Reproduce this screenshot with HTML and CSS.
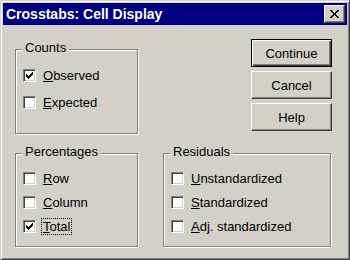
FILE: index.html
```html
<!DOCTYPE html>
<html lang="en">
  <head>
    <meta charset="UTF-8" />
    <title>Crosstabs: Cell Display</title>
    <link rel="stylesheet" href="styles.css">
  </head>
  <body>
    <div class="window">
      <div class="titlebar">
        <span class="title">Crosstabs: Cell Display</span>
        <button class="close-btn">
          <svg width="9" height="8" viewBox="0 0 9 8" shape-rendering="crispEdges">
            <path d="M0 0h2v1h-2zM7 0h2v1h-2zM1 1h2v1h-2zM6 1h2v1h-2zM2 2h2v1h-2zM5 2h2v1h-2zM3 3h3v2h-3zM2 5h2v1h-2zM5 5h2v1h-2zM1 6h2v1h-2zM6 6h2v1h-2zM0 7h2v1h-2zM7 7h2v1h-2z" fill="#000"/>
          </svg>
        </button>
      </div>
      <div class="content">
        <div class="row top-row">
          <div class="group counts">
            <div class="legend">Counts</div>
            <div class="check-list">
              <div class="check">
                <span class="box checked"></span>
                <span class="text"><u>O</u>bserved</span>
              </div>
              <div class="check">
                <span class="box"></span>
                <span class="text"><u>E</u>xpected</span>
              </div>
            </div>
          </div>
          <div class="buttons">
            <button class="btn default">Continue</button>
            <button class="btn">Cancel</button>
            <button class="btn">Help</button>
          </div>
        </div>
        <div class="row bottom-row">
          <div class="group percentages">
            <div class="legend">Percentages</div>
            <div class="check-list">
              <div class="check">
                <span class="box"></span>
                <span class="text"><u>R</u>ow</span>
              </div>
              <div class="check">
                <span class="box"></span>
                <span class="text"><u>C</u>olumn</span>
              </div>
              <div class="check">
                <span class="box checked"></span>
                <span class="text focused"><u>T</u>otal</span>
              </div>
            </div>
          </div>
          <div class="group residuals">
            <div class="legend">Residuals</div>
            <div class="check-list">
              <div class="check">
                <span class="box"></span>
                <span class="text"><u>U</u>nstandardized</span>
              </div>
              <div class="check">
                <span class="box"></span>
                <span class="text"><u>S</u>tandardized</span>
              </div>
              <div class="check">
                <span class="box"></span>
                <span class="text"><u>A</u>dj. standardized</span>
              </div>
            </div>
          </div>
        </div>
      </div>
    </div>
  </body>
</html>
```

FILE: styles.css
```css
* {
  box-sizing: border-box;
}
body {
  margin: 0;
  font-family: "Liberation Sans", Arial, sans-serif;
  font-size: 13px;
  color: #000000;
}
.window {
  width: 350px;
  height: 260px;
  background-color: #d4d0c8;
  border: 1px solid;
  border-color: #d4d0c8 #404040 #404040 #d4d0c8;
  box-shadow: inset 1px 1px #ffffff, inset -1px -1px #808080;
  padding: 2px;
}
.titlebar {
  height: 22px;
  background-color: #000080;
  color: #ffffff;
  display: flex;
  justify-content: space-between;
  align-items: center;
  padding: 0 2px 0 3px;
}
.title {
  font-weight: bold;
  font-size: 14px;
  line-height: 16px;
}
.close-btn {
  width: 21px;
  height: 18px;
  padding: 0;
  display: flex;
  justify-content: center;
  align-items: center;
  background-color: #d4d0c8;
  border: 1px solid;
  border-color: #ffffff #404040 #404040 #ffffff;
  box-shadow: inset -1px -1px #808080;
}
.content {
  padding: 14px 0 0 12px;
}
.row {
  display: flex;
  align-items: flex-start;
}
.group {
  border: 1px solid #808080;
  box-shadow: inset 1px 1px #ffffff, 1px 1px #ffffff;
  padding-left: 7px;
}
.legend {
  width: fit-content;
  margin: -10px 0 0 -1px;
  padding: 0 3px;
  line-height: 15px;
  background-color: #d4d0c8;
}
.counts {
  margin-top: 10px;
  width: 123px;
  height: 85px;
}
.counts .check-list {
  margin-top: 12px;
  gap: 10px;
}
.buttons {
  margin-left: 113px;
  display: flex;
  flex-direction: column;
  gap: 4px;
}
.btn {
  width: 81px;
  height: 28px;
  padding: 0;
  font-family: inherit;
  font-size: 13px;
  color: #000000;
  background-color: #d4d0c8;
  border: 1px solid;
  border-color: #ffffff #404040 #404040 #ffffff;
  box-shadow: inset -1px -1px #808080;
}
.btn.default {
  border: 1px solid #000000;
  box-shadow: inset 1px 1px #ffffff, inset -1px -1px #404040, inset -2px -2px #808080;
}
.bottom-row {
  margin-top: 19px;
}
.percentages {
  width: 123px;
  height: 94px;
}
.residuals {
  margin-left: 25px;
  width: 168px;
  height: 94px;
}
.check-list {
  display: flex;
  flex-direction: column;
  margin-top: 11px;
  gap: 7px;
}
.check {
  display: flex;
  align-items: center;
  height: 17px;
}
.box {
  width: 13px;
  height: 13px;
  flex: none;
  background-color: #ffffff;
  border: 1px solid;
  border-color: #808080 #ffffff #ffffff #808080;
  box-shadow: inset 1px 1px #404040, inset -1px -1px #d4d0c8;
}
.box.checked {
  background-image: url("data:image/svg+xml;utf8,<svg xmlns='http://www.w3.org/2000/svg' width='11' height='11' shape-rendering='crispEdges'><path d='M8 2h1v1h-1zM7 3h2v1h-2zM2 4h1v1h-1zM6 4h3v1h-3zM2 5h2v1h-2zM5 5h3v1h-3zM2 6h5v1h-5zM3 7h3v1h-3zM4 8h1v1h-1z' fill='black'/></svg>");
  background-repeat: no-repeat;
}
.text {
  margin-left: 5px;
  padding: 0 1px;
  line-height: 15px;
  border: 1px dotted transparent;
  white-space: nowrap;
}
.text.focused {
  border-color: #000000;
}
```
